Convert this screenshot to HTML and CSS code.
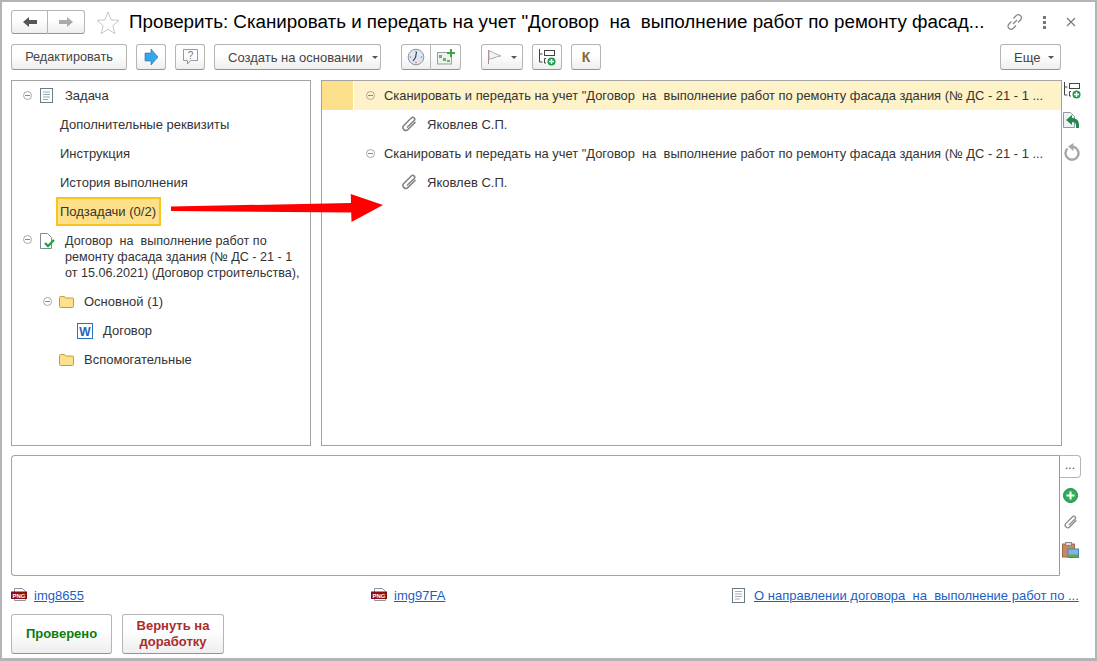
FILE: index.html
```html
<!DOCTYPE html>
<html lang="ru">
<head>
<meta charset="utf-8">
<title>Проверить</title>
<link rel="stylesheet" href="styles.css">
</head>
<body>
<div class="window">
  <header class="head">
    <div class="btn-group nav">
      <button class="btn cell"><svg width="16" height="12" viewBox="0 0 16 12"><path d="M1 6l6-5v3h8v4H7v3z" fill="#555"/></svg></button>
      <button class="btn cell"><svg width="16" height="12" viewBox="0 0 16 12"><path d="M15 6L9 1v3H1v4h8v3z" fill="#aaa"/></svg></button>
    </div>
    <svg class="star" width="24" height="23" viewBox="0 0 24 23"><path d="M12 1l3 7.800 8 .6-6.200 5.200 2 8-6.800-4.300L5.200 22.600l2-8L1 9.400l8-.6z" fill="#fff" stroke="#c4c8cc"/></svg>
    <h1 class="title">Проверить: Сканировать и передать на учет "Договор  на  выполнение работ по ремонту фасад...</h1>
    <div class="head-tools">
      <svg width="18" height="18" viewBox="0 0 18 18" fill="none" stroke="#888" stroke-width="1.300"><path d="M7.500 5.500l2.500-2.700a3 3 0 0 1 4.700 4L12 9.600"/><path d="M10 12.500l-2.500 2.700a3 3 0 0 1-4.700-4L5.500 8.400"/><path d="M7 11l4-4"/></svg>
      <svg width="6" height="14" viewBox="0 0 6 14" fill="#777"><rect x="1" y="1" width="3" height="3"/><rect x="1" y="6" width="3" height="3"/><rect x="1" y="11" width="3" height="3"/></svg>
      <svg width="10" height="10" viewBox="0 0 10 10" stroke="#777" stroke-width="1.100"><path d="M1 1l8 8M9 1L1 9"/></svg>
    </div>
  </header>

  <div class="toolbar">
    <button class="btn btn-edit">Редактировать</button>
    <button class="btn btn-icon"><svg width="14" height="16" viewBox="0 0 14 16"><path d="M1 4h6V0l7 8-7 8v-4H1z" fill="#35a7e8" stroke="#2b6ea8" stroke-width=".6"/></svg></button>
    <button class="btn btn-icon"><svg width="17" height="18" viewBox="0 0 17 18" fill="none" stroke="#999"><path d="M1.500 1.500h14v11h-7l-3 3.500v-3.500h-4z"/><text x="8.500" y="10.500" class="q-mark">?</text></svg></button>
    <button class="btn btn-create">Создать на основании<span class="caret"></span></button>
    <div class="btn-group group-b">
      <button class="btn cell cell-w"><svg width="18" height="18" viewBox="0 0 18 18"><circle cx="9" cy="9" r="7.800" fill="#dce7f2" stroke="#8a97a5"/><path d="M9.500 4L8.500 9.500 6 13" fill="none" stroke="#34465c" stroke-width="1.200"/><circle cx="9" cy="3.500" r=".8" fill="#d66"/><circle cx="3.500" cy="9" r=".8" fill="#d66"/><circle cx="14.500" cy="9" r=".8" fill="#d66"/><circle cx="9" cy="14.500" r=".8" fill="#d66"/></svg></button>
      <button class="btn cell cell-w"><svg width="18" height="16" viewBox="0 0 18 16"><rect x=".5" y="3.500" width="14" height="11.500" fill="#eef2ee" stroke="#99a199"/><path d="M2 6h3v3H2zM6 9h3v3H6zM10 11h3v2h-3z" fill="#6cb06c"/><path d="M10 3h3V0h2v3h3v2h-3v3h-2V5h-3z" fill="#3aa648"/></svg></button>
    </div>
    <button class="btn btn-flag"><svg width="15" height="16" viewBox="0 0 15 16" fill="none"><path d="M1.500 1v14" stroke="#a88"/><path d="M2 2c3 0 4 2 6 2.500L14 7c-3 .5-4 .5-6 1.500S4 10 2 10z" fill="#f4f4f4" stroke="#aaa"/></svg><span class="caret"></span></button>
    <button class="btn btn-icon"><svg width="18" height="18" viewBox="0 0 18 18" fill="none" stroke="#444"><path d="M1.500 1v13h3M1.500 6h3"/><rect x="6.500" y="2.500" width="10" height="5"/><path d="M8 10.500H6.500v4.500H8"/><circle cx="13.500" cy="13.500" r="4" fill="#1d9c4a" stroke="none"/><path d="M13.500 11v5M11 13.500h5" stroke="#fff" stroke-width="1.500"/></svg></button>
    <button class="btn btn-icon btn-k">К</button>
    <button class="btn btn-more">Еще<span class="caret"></span></button>
  </div>

  <main class="main">
    <section class="panel tree">
      <div class="row"><span class="toggle"></span><svg class="ic" width="14" height="16" viewBox="0 0 14 16" fill="none" stroke="#6b7b85"><rect x=".5" y=".5" width="12" height="14"/><path d="M3 4h7M3 6.500h7M3 9h7M3 11.500h5" stroke="#9aa"/></svg><span class="lbl-task">Задача</span></div>
      <div class="row sub">Дополнительные реквизиты</div>
      <div class="row sub">Инструкция</div>
      <div class="row sub">История выполнения</div>
      <div class="row sub"><span class="active-item">Подзадачи (0/2)</span></div>
      <div class="row row-multi"><span class="toggle"></span><svg class="ic" width="15" height="17" viewBox="0 0 15 17" fill="none"><path d="M.5.5h7l4 4v11H.5z" fill="#fff" stroke="#7d8c96"/><path d="M5 10l3 3 6-6" stroke="#2aa148" stroke-width="2.400"/></svg><span class="lbl-doc">Договор  на  выполнение работ по ремонту фасада здания (№ ДС - 21 - 1 от 15.06.2021) (Договор строительства),</span></div>
      <div class="row lvl2"><span class="toggle"></span><svg class="folder" width="15" height="13" viewBox="0 0 15 13"><path d="M.5 2.500a1 1 0 0 1 1-1h4l1 1.500h7a1 1 0 0 1 1 1v7.500a1 1 0 0 1-1 1h-12a1 1 0 0 1-1-1z" fill="#fce08e" stroke="#c79a3c"/></svg><span>Основной (1)</span></div>
      <div class="row lvl3"><svg class="word" width="16" height="16" viewBox="0 0 16 16"><rect x=".5" y=".5" width="15" height="15" fill="#fff" stroke="#2a72bd"/><text x="8" y="12.500" class="w-mark">W</text></svg><span>Договор</span></div>
      <div class="row lvl2b"><svg class="folder" width="15" height="13" viewBox="0 0 15 13"><path d="M.5 2.500a1 1 0 0 1 1-1h4l1 1.500h7a1 1 0 0 1 1 1v7.500a1 1 0 0 1-1 1h-12a1 1 0 0 1-1-1z" fill="#fce08e" stroke="#c79a3c"/></svg><span>Вспомогательные</span></div>
    </section>

    <section class="panel list">
      <div class="lrow selected"><span class="marker"></span><span class="toggle"></span><span class="ltext">Сканировать и передать на учет "Договор  на  выполнение работ по ремонту фасада здания (№ ДС - 21 - 1 ...</span></div>
      <div class="lrow child"><svg class="clip" width="16" height="17" viewBox="0 0 16 17" fill="none" stroke="#808080" stroke-width="1.500"><path d="M14.500 6L7 13.500a2.800 2.800 0 0 1-4.200-4L10.300 2a1.900 1.900 0 0 1 2.900 2.600L6 11.500"/></svg><span>Яковлев С.П.</span></div>
      <div class="lrow"><span class="marker blank"></span><span class="toggle"></span><span class="ltext">Сканировать и передать на учет "Договор  на  выполнение работ по ремонту фасада здания (№ ДС - 21 - 1 ...</span></div>
      <div class="lrow child"><svg class="clip" width="16" height="17" viewBox="0 0 16 17" fill="none" stroke="#808080" stroke-width="1.500"><path d="M14.500 6L7 13.500a2.800 2.800 0 0 1-4.200-4L10.300 2a1.900 1.900 0 0 1 2.900 2.600L6 11.500"/></svg><span>Яковлев С.П.</span></div>
    </section>

    <aside class="side-tools">
      <svg width="18" height="18" viewBox="0 0 18 18" fill="none" stroke="#444"><path d="M1.500 1v13h3M1.500 6h3"/><rect x="6.500" y="2.500" width="10" height="5"/><path d="M8 10.500H6.500v4.500H8"/><circle cx="13.500" cy="13.500" r="4" fill="#1d9c4a" stroke="none"/><path d="M13.500 11v5M11 13.500h5" stroke="#fff" stroke-width="1.500"/></svg>
      <svg width="17" height="18" viewBox="0 0 17 18"><path d="M.5.5h7l4 4v11H.5z" fill="#eef1f3" stroke="#8c99a3"/><path d="M3 8l6-5v3c4 0 7 2 7 7v3h-3v-3c0-2-2-3-4-3v3z" fill="#1f8a4c"/></svg>
      <svg width="18" height="18" viewBox="0 0 18 18" fill="none" stroke="#a9a5a0" stroke-width="2.400"><path d="M4.500 5.500A6.500 6.500 0 1 0 10 3.800"/><path d="M10.500 0v8L5 3.500z" fill="#a9a5a0" stroke="none"/></svg>
    </aside>
  </main>

  <section class="comment">
    <div class="comment-box"></div>
    <div class="comment-side">
      <button class="dots">...</button>
      <div class="comment-tools">
        <svg width="15" height="15" viewBox="0 0 15 15"><circle cx="7.500" cy="7.500" r="7" fill="#2fae55" stroke="#1f8a42"/><path d="M7.500 3.500v8M3.500 7.500h8" stroke="#fff" stroke-width="2"/></svg>
        <svg width="15" height="15" viewBox="0 0 16 17" fill="none" stroke="#8a8a8a" stroke-width="1.500"><path d="M14.500 6L7 13.500a2.800 2.800 0 0 1-4.200-4L10.300 2a1.900 1.900 0 0 1 2.900 2.600L6 11.500"/></svg>
        <svg width="17" height="16" viewBox="0 0 17 16"><rect x=".5" y="2" width="12" height="13" fill="#c48a64" stroke="#9a6a48"/><rect x="3.500" y=".5" width="6" height="3" fill="#ddd" stroke="#888"/><rect x="6" y="7" width="10.500" height="8.500" fill="#7fb5e6" stroke="#4b83b8"/><rect x="6.500" y="12.500" width="9.500" height="2.500" fill="#63a845"/></svg>
      </div>
    </div>
  </section>

  <div class="attachments">
    <div class="att att-a"><svg class="png-ic" width="17" height="14" viewBox="0 0 17 14"><path d="M3.500.5h8l3 3v9h-11z" fill="#fff" stroke="#8a97a3"/><rect y="3.500" width="16" height="7.500" fill="#8b0f10"/><text x="8" y="9.500" class="png-mark">PNG</text></svg><a class="link" href="#">img8655</a></div>
    <div class="att att-b"><svg class="png-ic" width="17" height="14" viewBox="0 0 17 14"><path d="M3.500.5h8l3 3v9h-11z" fill="#fff" stroke="#8a97a3"/><rect y="3.500" width="16" height="7.500" fill="#8b0f10"/><text x="8" y="9.500" class="png-mark">PNG</text></svg><a class="link" href="#">img97FA</a></div>
    <div class="att att-c"><svg class="doc-ic" width="13" height="15" viewBox="0 0 13 15" fill="none" stroke="#6b7b85"><rect x=".5" y=".5" width="12" height="14"/><path d="M3 3.500h7M3 6h7M3 8.500h7M3 11h5" stroke="#aab"/></svg><a class="link link-long" href="#">О направлении договора  на  выполнение работ по ...</a></div>
  </div>

  <footer class="actions">
    <button class="btn act act-ok">Проверено</button>
    <button class="btn act act-back">Вернуть на доработку</button>
  </footer>

  <svg class="arrow" width="215" height="36" viewBox="0 0 215 36"><path d="M0 16.500L180 13l-.2-9L212 15l-31.500 17-.3-9.500L0 21z" fill="#f00"/></svg>
</div>
</body>
</html>
```

FILE: styles.css
```css
* { box-sizing: border-box; }
html, body { margin: 0; padding: 0; }
body { width: 1097px; height: 661px; overflow: hidden; background: #fff; font-family: "Liberation Sans", Arial, sans-serif; font-size: 13px; color: #333; }
button { font: inherit; color: inherit; }

.window { position: relative; width: 1097px; height: 661px; border: solid #b4b4b4; border-width: 2px 2px 3px 2px; padding: 8px 14px 0 9px; display: flex; flex-direction: column; background: #fff; }

.btn { display: inline-flex; align-items: center; justify-content: center; height: 26px; padding: 0; border: 1px solid #b5b5b5; border-bottom-color: #949494; border-radius: 3px; background: linear-gradient(#fff 40%, #eee); color: #444; white-space: pre; }
.btn-group { display: flex; }
.btn-group .cell { border-radius: 0; width: 30px; }
.btn-group .cell:first-child { border-radius: 3px 0 0 3px; }
.btn-group .cell:last-child { border-radius: 0 3px 3px 0; border-left: 0; }

.head { display: flex; align-items: center; height: 24px; }
.nav { width: 74px; }
.nav .cell { width: 37px; height: 24px; }
.star { margin-left: 11px; flex: none; }
.title { flex: 1; min-width: 0; margin: 0 0 0 9px; font-size: 18.8px; font-weight: normal; color: #000; white-space: pre; overflow: hidden; text-overflow: ellipsis; }
.head-tools { display: flex; align-items: center; gap: 18px; margin-left: 17px; width: 75px; }

.toolbar { display: flex; align-items: center; gap: 9px; margin-top: 10px; height: 26px; padding-right: 20px; }
.btn-edit { width: 116px; font-size: 12.7px; }
.btn-icon { width: 30px; }
.btn-create { width: 167px; justify-content: flex-start; padding-left: 13px; }
.caret { display: inline-block; margin-left: 9px; width: 0; height: 0; border: 3px solid transparent; border-top: 3px solid #555; border-bottom: 0; }
.group-b { margin-left: 11px; }
.btn-flag { width: 42px; margin-left: 11px; }
.btn-k { font-weight: bold; font-size: 14px; color: #7d6a3a; }
.btn-more { width: 61px; margin-left: auto; justify-content: flex-start; padding-left: 13px; }
.btn-more .caret { margin-left: 8px; }

.main { display: flex; height: 367px; margin-top: 10px; }
.panel { border: 1px solid #a3a3a3; height: 366px; background: #fff; }
.tree { width: 300px; }
.list { width: 741px; margin-left: 10px; }

.row { display: flex; align-items: center; height: 29px; padding-left: 11px; white-space: pre; }
.toggle { flex: none; width: 9px; height: 9px; border: 1px solid #a8a8a8; border-radius: 50%; background: linear-gradient(#888, #888) center / 5px 1px no-repeat; }
.ic { margin-left: 8px; flex: none; }
.lbl-task { margin-left: 11px; }
.sub { padding-left: 48px; }
.active-item { display: flex; align-items: center; width: 105px; height: 29px; margin-left: -4px; padding-left: 2px; border: 2px solid #f7c51d; background: #fde089; }
.row-multi { align-items: flex-start; height: 61px; padding-top: 7px; }
.row-multi .toggle { margin-top: 2px; }
.lbl-doc { width: 238px; margin-left: 10px; font-size: 12.6px; line-height: 16px; white-space: pre-wrap; }
.lvl2 { padding-left: 31px; }
.lvl2 .folder { margin-left: 7px; }
.folder { flex: none; }
.lvl2 span:last-child, .lvl2b span:last-child { margin-left: 10px; }
.lvl3 { padding-left: 65px; }
.word { flex: none; }
.lvl3 span { margin-left: 10px; }
.w-mark { font: bold 12px "Liberation Sans", sans-serif; fill: #1f67b5; text-anchor: middle; }
.q-mark { font: 10px "Liberation Sans", sans-serif; fill: #777; stroke: none; text-anchor: middle; }
.png-mark { font: bold 6px "Liberation Sans", sans-serif; fill: #fff; text-anchor: middle; }
.lvl2b { padding-left: 47px; }

.lrow { display: flex; align-items: center; height: 29px; white-space: pre; }
.lrow.selected { background: #fdf2c8; }
.marker { flex: none; width: 32px; height: 100%; margin-right: 12px; background: #fde08c; border-right: 1px solid #fff; }
.marker.blank { background: none; border: 0; }
.ltext { flex: 1; min-width: 0; margin-left: 9px; margin-right: 10px; font-size: 12.9px; overflow: hidden; text-overflow: ellipsis; }
.child { padding-left: 79px; }
.clip { flex: none; margin-right: 10px; }

.side-tools { display: flex; flex-direction: column; align-items: center; gap: 13px; width: 19px; padding-top: 1px; }

.comment { display: flex; margin-top: 8px; height: 122px; }
.comment-box { width: 1050px; height: 121px; border: 1px solid #a3a3a3; border-right-color: #999; border-radius: 4px 0 0 4px; }
.comment-side { width: 21px; }
.dots { display: block; width: 21px; height: 23px; padding: 0 0 4px; border: 1px solid #b5b5b5; border-left: 0; border-radius: 0 4px 4px 0; background: #fff; font-size: 12px; line-height: 1; color: #444; }
.comment-tools { display: flex; flex-direction: column; align-items: center; gap: 12px; margin-top: 10px; }

.attachments { display: flex; align-items: center; height: 16px; margin-top: 10px; }
.att { display: flex; align-items: center; white-space: pre; }
.att-a { width: 360px; }
.att-b { width: 361px; }
.att-c { width: 347px; min-width: 0; }
.png-ic { flex: none; margin-right: 6px; }
.doc-ic { flex: none; margin-right: 9px; }
.link { color: #1c5fc4; text-decoration: underline; }
.link-long { min-width: 0; overflow: hidden; text-overflow: ellipsis; }

.actions { display: flex; gap: 10px; margin-top: 11px; }
.act { height: 40px; font-weight: bold; font-size: 13px; line-height: 16px; white-space: normal; text-align: center; }
.act-ok { width: 101px; color: #0b7d0b; }
.act-back { width: 102px; color: #a92d2d; padding: 0 10px; }

.arrow { position: absolute; left: 169px; top: 188px; }
```
